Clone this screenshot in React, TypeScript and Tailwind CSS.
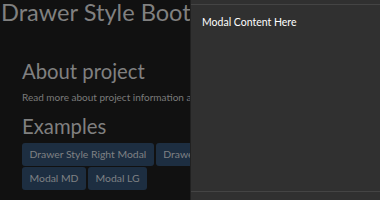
import React from "react";

export default function App() {
  const btn =
    "h-[23px] px-[7.5px] rounded-[3px] bg-[#1d2e41] text-[#7f8184] text-[10.4px] leading-[23px] whitespace-nowrap";
  return (
    <div className="relative w-[380px] h-[200px] overflow-hidden bg-[#111111] font-['Lato',sans-serif]">
      <h1 className="pl-[1px] text-[23.6px] leading-[24px] text-[#808080] whitespace-nowrap">
        Drawer Style Bootstrap Modal
      </h1>
      <div className="px-[22px] w-[600px]">
        <h2 className="mt-[35px] text-[20.3px] leading-[24px] text-[#808080]">About project</h2>
        <p className="mt-[7px] text-[10px] leading-[15.75px] text-[#7a7a7a] whitespace-nowrap">
          Read more about project information and usage
        </p>
        <h2 className="mt-[8px] text-[20.3px] leading-[24px] text-[#808080]">Examples</h2>
        <div className="mt-[5px] w-[300px] flex flex-wrap gap-x-[2px] gap-y-[1.5px]">
          <button className={btn}>Drawer Style Right Modal</button>
          <button className={btn}>Drawer Style Left Modal</button>
          <button className={btn}>Modal MD</button>
          <button className={btn}>Modal LG</button>
        </div>
      </div>
      <div className="absolute top-0 bottom-0 left-[190px] right-0 flex flex-col bg-[#303030] border-l border-black/30">
        <div className="h-[5px] border-b border-[#444444]" />
        <div className="flex-1 pl-[11px] pt-[10px] text-[10.5px] leading-[15.75px] text-white">
          Modal Content Here
        </div>
        <div className="h-[9px] border-t border-[#444444]" />
      </div>
    </div>
  );
}
